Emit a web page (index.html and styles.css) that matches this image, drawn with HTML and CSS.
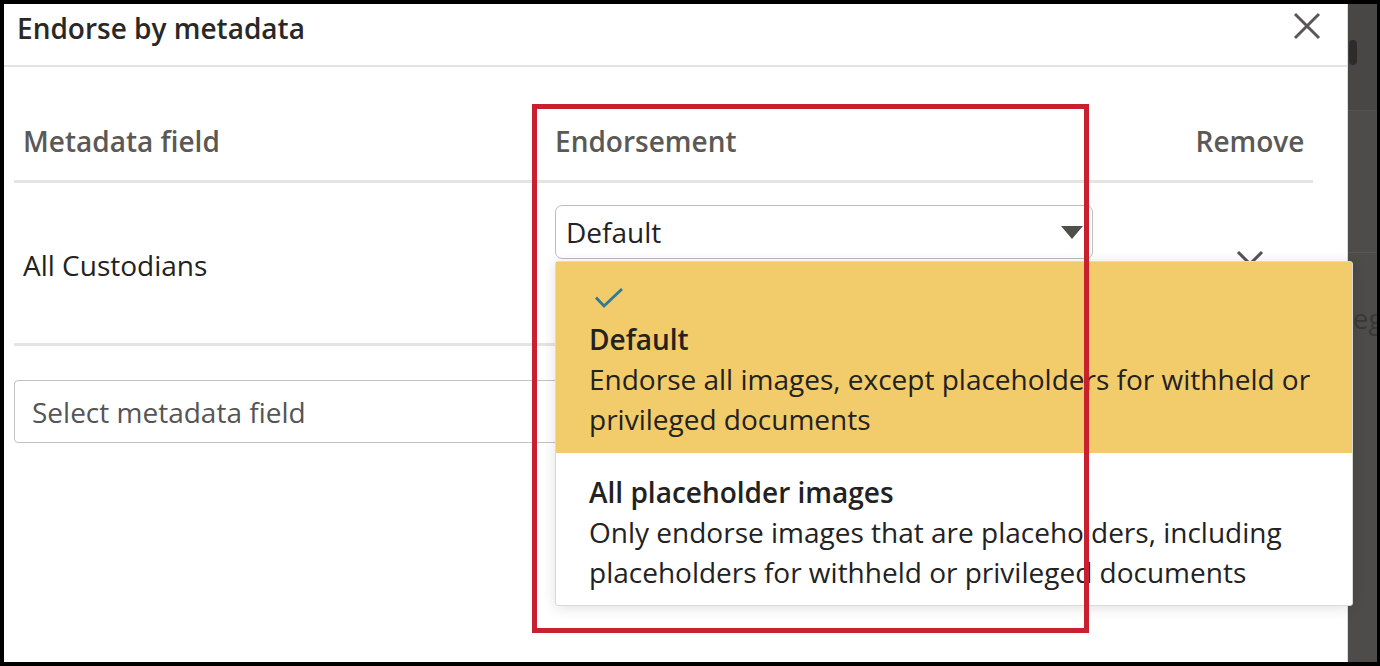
FILE: index.html
```html
<!DOCTYPE html>
<html lang="en">
<head>
    <meta charset="UTF-8">
    <meta name="viewport" content="width=device-width, initial-scale=1.0">
    <title>Endorse by metadata</title>
    <link rel="stylesheet" href="styles.css">
</head>
<body>
    <div class="dialog">
        <div class="dialog-header">
            <h2>Endorse by metadata</h2>
            <button class="close" aria-label="Close">
                <svg width="28" height="28" viewBox="0 0 28 28"><path d="M2 2 L26 26 M26 2 L2 26" stroke="#5a5856" stroke-width="3" fill="none"/></svg>
            </button>
        </div>

        <div class="dialog-body">
            <div class="row head">
                <div class="cell">Metadata field</div>
                <div class="cell">Endorsement</div>
                <div class="cell center">Remove</div>
            </div>

            <div class="row item">
                <div class="cell field">All Custodians</div>
                <div class="cell select-cell">
                    <div class="select">
                        <span>Default</span>
                        <span class="caret"></span>
                    </div>

                    <div class="menu">
                        <div class="option selected">
                            <div class="check">
                                <svg width="38" height="40" viewBox="0 0 38 40"><polyline points="7,18.5 15,27 33,10" stroke="#2f7b96" stroke-width="2.8" fill="none"/></svg>
                            </div>
                            <div class="option-title">Default</div>
                            <div class="option-desc">Endorse all images, except placeholders for withheld or privileged documents</div>
                        </div>
                        <div class="option">
                            <div class="option-title">All placeholder images</div>
                            <div class="option-desc">Only endorse images that are placeholders, including placeholders for withheld or privileged documents</div>
                        </div>
                    </div>
                </div>
                <div class="cell remove-cell">
                    <svg width="28" height="28" viewBox="0 0 28 28"><path d="M2 2 L26 26 M26 2 L2 26" stroke="#555350" stroke-width="3" fill="none"/></svg>
                </div>
            </div>

            <div class="add-field">Select metadata field</div>
        </div>
    </div>

    <div class="backdrop">
        <div class="bg-top"><div class="thumb"></div></div>
        <div class="bg-row"></div>
        <div class="bg-text">privileged</div>
    </div>

    <div class="highlight-box"></div>
</body>
</html>
```

FILE: styles.css
```css
html, body { margin: 0; height: 100%; }
body { background: #000; padding: 4px 3px 4px 4px; box-sizing: border-box; display: flex; font-family: "Open Sans", "Noto Sans", sans-serif; font-size: 28px; line-height: 40px; color: #222; overflow: hidden; }

.dialog { width: 1344px; flex: none; background: #fff; border-right: 1px solid #dcdcdc; box-sizing: border-box; position: relative; z-index: 1; }
.dialog-header { height: 57px; border-bottom: 2px solid #e3e3e3; display: flex; justify-content: space-between; align-items: flex-start; padding: 4px 26px 0 13px; }
.dialog-header h2 { margin: 0; font-size: 28px; font-weight: 600; line-height: 40px; color: #2a2826; }
.close { background: none; border: none; padding: 0; margin-top: 4px; width: 28px; height: 28px; cursor: pointer; }
.close svg { display: block; }

.dialog-body { padding: 0 34px 0 10px; }
.row { display: grid; grid-template-columns: 532px 1fr 126px; border-bottom: 3px solid #e4e4e2; }
.cell { padding-left: 9px; }
.cell.center { padding-left: 0; text-align: center; }
.head { padding: 54px 0 19px; font-weight: 600; color: #5b5956; }

.item { height: 160px; }
.field { align-self: center; padding-top: 4px; }
.select-cell { position: relative; padding-top: 22px; }
.select { width: 538px; height: 54px; box-sizing: border-box; border: 1.5px solid #bcbcba; border-radius: 7px; display: flex; align-items: center; justify-content: space-between; padding: 0 9px 0 10px; }
.caret { width: 0; height: 0; border-left: 11.5px solid transparent; border-right: 11.5px solid transparent; border-top: 13px solid #504e4b; }
.remove-cell { padding-left: 0; padding-top: 67px; display: flex; justify-content: center; align-items: flex-start; }
.remove-cell svg { display: block; }

.menu { position: absolute; left: 9px; top: 78px; width: 798px; box-sizing: border-box; background: #fff; border: 1px solid #dadada; border-radius: 3px; box-shadow: 0 2px 14px rgba(0, 0, 0, 0.12); z-index: 2; }
.option { padding: 19px 34px 13px 33px; }
.option.selected { background: #f2cb6b; padding-top: 17px; padding-bottom: 14px; }
.check { height: 40px; }
.check svg { display: block; }
.option-title { font-weight: 600; }

.add-field { margin-top: 34px; height: 63px; box-sizing: border-box; border: 1.5px solid #c3c3c1; border-radius: 4px; padding-left: 17px; display: flex; align-items: center; color: #555; }

.backdrop { flex: 1; background: #4e4c4a; overflow: hidden; }
.bg-top { height: 70px; padding-top: 36px; background: #494745; border-bottom: 1px solid #55534f; }
.thumb { margin-left: 1px; width: 8px; height: 25px; background: #2d2c2b; border-radius: 4px; }
.bg-row { height: 141px; border-bottom: 1px solid #5a5855; }
.bg-text { padding-top: 45px; margin-left: -59px; white-space: nowrap; color: #3a3938; }

.highlight-box { position: absolute; left: 532px; top: 104px; width: 557px; height: 529px; box-sizing: border-box; border: 5px solid #c8202e; z-index: 5; }
```
